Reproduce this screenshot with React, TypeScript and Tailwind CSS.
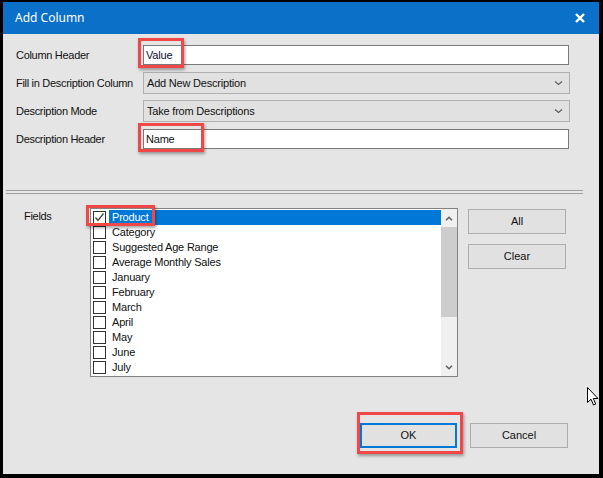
import React from "react";

const font = { fontFamily: '"Liberation Sans", Arial, sans-serif' };

const fields = [
  "Product",
  "Category",
  "Suggested Age Range",
  "Average Monthly Sales",
  "January",
  "February",
  "March",
  "April",
  "May",
  "June",
  "July",
];

function Chevron() {
  return (
    <svg width="9" height="6" viewBox="0 0 9 6" className="mr-[6px]">
      <path d="M1 1.5 L4.5 4.5 L8 1.5" fill="none" stroke="#5a5a5a" strokeWidth="1.1" />
    </svg>
  );
}

function Label({ children }: { children: React.ReactNode }) {
  return <div className="w-[127px] shrink-0 text-[11px] tracking-[-0.3px] text-[#111]">{children}</div>;
}

export default function App() {
  return (
    <div
      className="w-[603px] h-[478px] bg-black pt-[2px] pl-[3px] pr-[4px] pb-[4px] flex flex-col"
      style={font}
    >
      {/* Title bar */}
      <div className="h-[32px] shrink-0 bg-[#0b70c8] flex items-center justify-between pl-[12px] pr-[14px]">
        <span
          className="text-white text-[12px]"
          style={{ fontFamily: '"Noto Sans", "Open Sans", sans-serif' }}
        >
          Add Column
        </span>
        <svg width="10" height="10" viewBox="0 0 10 10">
          <path d="M1 1 L9 9 M9 1 L1 9" stroke="white" strokeWidth="2.4" />
        </svg>
      </div>

      {/* Body */}
      <div className="flex-1 bg-[#e5e5e5] relative flex flex-col">
        <div className="pl-[13px] flex flex-col">
          <div className="flex items-center mt-[11px] h-[20px]">
            <Label>Column Header</Label>
            <div className="w-[426px] h-[20px] bg-white border border-[#7a7a7a] flex items-center pl-[2px] text-[11px] tracking-[-0.2px] text-[#101030]">
              Value
            </div>
          </div>
          <div className="flex items-center mt-[7px] h-[22px]">
            <Label>Fill in Description Column</Label>
            <div className="w-[427px] h-[22px] bg-[#e1e1e1] border border-[#b0b0b0] flex items-center justify-between pl-[3px] text-[11px] tracking-[-0.2px] text-[#111]">
              <span>Add New Description</span>
              <Chevron />
            </div>
          </div>
          <div className="flex items-center mt-[6px] h-[22px]">
            <Label>Description Mode</Label>
            <div className="w-[427px] h-[22px] bg-[#e1e1e1] border border-[#b0b0b0] flex items-center justify-between pl-[3px] text-[11px] tracking-[-0.2px] text-[#111]">
              <span>Take from Descriptions</span>
              <Chevron />
            </div>
          </div>
          <div className="flex items-center mt-[7px] h-[20px]">
            <Label>Description Header</Label>
            <div className="w-[426px] h-[20px] bg-white border border-[#7a7a7a] flex items-center pl-[2px] text-[11px] tracking-[-0.2px] text-[#111]">
              Name
            </div>
          </div>
        </div>

        {/* Separator */}
        <div className="ml-[3px] mt-[41px] w-[577px] h-[4px] border-t border-b border-[#a0a0a0]" />

        {/* Fields */}
        <div className="flex mt-[14px] pl-[21px]">
          <div className="w-[66px] shrink-0 text-[11px] tracking-[-0.3px] text-[#111] pt-[0px]">Fields</div>
          <div className="w-[368px] h-[169px] bg-white border border-[#828282] flex">
            <div className="w-[350px] pt-[1px] flex flex-col">
              {fields.map((f, i) => (
                <div key={f} className="h-[15px] flex items-center pl-[2px]">
                  <div className="w-[13px] h-[13px] bg-white border border-[#333] flex items-center justify-center shrink-0">
                    {i === 0 && (
                      <svg width="11" height="11" viewBox="0 0 11 11">
                        <path d="M1.5 5.5 L4 8.5 L9.5 1.5" fill="none" stroke="#444" strokeWidth="1.3" />
                      </svg>
                    )}
                  </div>
                  <div
                    className={
                      "ml-[3px] h-[15px] flex items-center pl-[3px] text-[11px] tracking-[-0.2px] " +
                      (i === 0 ? "flex-1 bg-[#0078d7] text-white" : "text-[#111]")
                    }
                  >
                    {f}
                  </div>
                </div>
              ))}
            </div>
            {/* Scrollbar */}
            <div className="w-[16px] bg-[#f0f0f0] flex flex-col">
              <div className="h-[18px] flex items-center justify-center">
                <svg width="8" height="5" viewBox="0 0 8 5">
                  <path d="M1 4.2 L4 1.2 L7 4.2" fill="none" stroke="#606060" strokeWidth="1.5" />
                </svg>
              </div>
              <div className="h-[90px] bg-[#cdcdcd]" />
              <div className="flex-1" />
              <div className="h-[18px] flex items-center justify-center">
                <svg width="8" height="5" viewBox="0 0 8 5">
                  <path d="M1 0.8 L4 3.8 L7 0.8" fill="none" stroke="#606060" strokeWidth="1.5" />
                </svg>
              </div>
            </div>
          </div>
          <div className="ml-[10px] flex flex-col pt-[1px]">
            <button className="w-[98px] h-[25px] bg-[#e1e1e1] border border-[#adadad] text-[11px] text-[#111] flex items-center justify-center">
              All
            </button>
            <button className="mt-[10px] w-[98px] h-[25px] bg-[#e1e1e1] border border-[#adadad] text-[11px] text-[#111] flex items-center justify-center">
              Clear
            </button>
          </div>
        </div>

        {/* Footer */}
        <div className="mt-auto flex justify-end gap-[13px] pr-[31px] pb-[26px]">
          <button className="w-[97px] h-[25px] bg-[#e1e1e1] border-2 border-[#0078d7] text-[11px] text-[#111] flex items-center justify-center">
            OK
          </button>
          <button className="w-[98px] h-[25px] bg-[#e1e1e1] border border-[#adadad] text-[11px] text-[#111] flex items-center justify-center">
            Cancel
          </button>
        </div>

        {/* Red highlight boxes */}
        <div className="absolute left-[135px] top-[4px] w-[46px] h-[30px] border-[3px] border-[#f04848] shadow-[1px_2px_3px_rgba(0,0,0,0.35)]" />
        <div className="absolute left-[135px] top-[89px] w-[66px] h-[29px] border-[3px] border-[#f04848] shadow-[1px_2px_3px_rgba(0,0,0,0.35)]" />
        <div className="absolute left-[83px] top-[171px] w-[69px] h-[21px] border-[3px] border-[#f04848] shadow-[1px_2px_3px_rgba(0,0,0,0.35)]" />
        <div className="absolute left-[354px] top-[378px] w-[106px] h-[42px] border-[3px] border-[#f04848] shadow-[1px_2px_3px_rgba(0,0,0,0.35)]" />

        {/* Mouse cursor */}
        <svg className="absolute left-[584px] top-[353px]" width="12" height="19" viewBox="0 0 12 19">
          <path
            d="M0.5 0.5 L0.5 15.5 L4 12.2 L6.5 18 L8.7 17 L6.3 11.5 L11 11.5 Z"
            fill="white"
            stroke="black"
            strokeWidth="1"
            strokeLinejoin="round"
          />
        </svg>
      </div>
    </div>
  );
}
